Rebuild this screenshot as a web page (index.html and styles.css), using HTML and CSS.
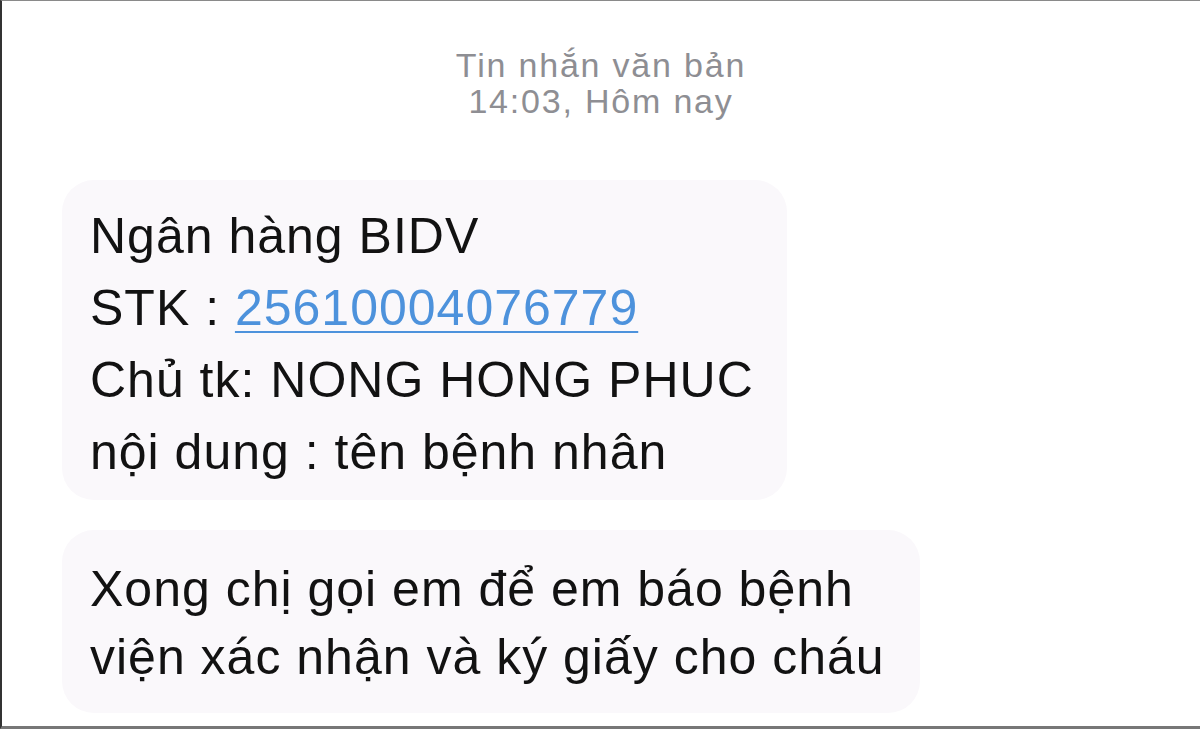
FILE: index.html
```html
<!DOCTYPE html>
<html lang="vi">
<head>
    <meta charset="UTF-8">
    <title>Tin nhắn</title>
    <link rel="stylesheet" href="styles.css">
</head>
<body>
    <div class="screen">
        <div class="thread-header">
            <p>Tin nhắn văn bản</p>
            <p>14:03, Hôm nay</p>
        </div>

        <div class="messages">
            <div class="bubble">
                <p>Ngân hàng BIDV</p>
                <p>STK : <a class="number" href="#">25610004076779</a></p>
                <p>Chủ tk: NONG HONG PHUC</p>
                <p>nội dung : tên bệnh nhân</p>
            </div>

            <div class="bubble bubble-second">
                <p>Xong chị gọi em để em báo bệnh</p>
                <p>viện xác nhận và ký giấy cho cháu</p>
            </div>
        </div>
    </div>
</body>
</html>
```

FILE: styles.css
```css
html, body {
    margin: 0;
    height: 100%;
}

body {
    font-family: 'Liberation Sans', Arial, sans-serif;
    background-color: #fff;
    color: #121212;
    box-sizing: border-box;
    border-top: 1px solid #8a8a8a;
    border-left: 2px solid #333;
    border-bottom: 3px solid #777;
    overflow: hidden;
}

.screen {
    display: flex;
    flex-direction: column;
}

p {
    margin: 0;
}

.thread-header {
    padding-top: 46px;
    text-align: center;
    color: #8e8e93;
    font-size: 34px;
    line-height: 36px;
    letter-spacing: 1.8px;
}

.messages {
    display: flex;
    flex-direction: column;
    align-items: flex-start;
    gap: 30px;
    margin-top: 61px;
    padding-left: 60px;
}

.bubble {
    background-color: #faf8fb;
    border-radius: 32px;
    padding: 20px 33px 12px 28px;
    font-size: 50px;
    line-height: 72px;
    letter-spacing: 1px;
}

.bubble-second {
    padding-top: 25px;
    padding-bottom: 22px;
    padding-right: 35px;
    line-height: 68px;
}

.number {
    color: #4d92dc;
    text-decoration: underline;
    text-underline-offset: 6px;
    text-decoration-thickness: 2px;
}
```
